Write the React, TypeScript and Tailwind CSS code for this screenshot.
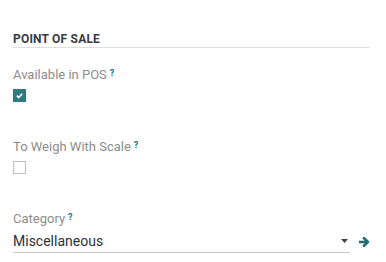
function Help() {
  return <sup className="ml-[3px] text-[9px] font-bold text-[#017e84] relative -top-[3px]">?</sup>;
}

function Check({ on }: { on: boolean }) {
  if (on)
    return (
      <div className="w-[13px] h-[13px] bg-[#2b7b80] flex items-center justify-center">
        <svg width="9" height="9" viewBox="0 0 10 10">
          <path d="M2 5.2 L4.1 7.2 L8 3" fill="none" stroke="white" strokeWidth="1.8" />
        </svg>
      </div>
    );
  return <div className="w-[13px] h-[13px] border border-[#bdbdbd] bg-white" />;
}

export default function App() {
  return (
    <div className="w-[386px] h-[262px] bg-white pl-[13px] pr-[16px] pt-[32px] font-['Roboto',sans-serif] overflow-hidden">
      <div className="text-[12px] font-bold tracking-[0.2px] text-[#3a3a44] leading-[14px] pb-[1px] border-b border-[#dfdfe2]">
        POINT OF SALE
      </div>

      <div className="mt-[19px] text-[13px] leading-[16px] text-[#8d8d8d]">
        Available in POS
        <Help />
      </div>
      <div className="mt-[6px]">
        <Check on />
      </div>

      <div className="mt-[37px] text-[13px] leading-[16px] text-[#8d8d8d]">
        To Weigh With Scale
        <Help />
      </div>
      <div className="mt-[6px]">
        <Check on={false} />
      </div>

      <div className="mt-[37px] text-[13px] leading-[16px] text-[#8d8d8d]">
        Category
        <Help />
      </div>
      <div className="mt-[6px] flex items-center">
        <div className="flex-1 flex items-center border-b border-[#c9c9c9] pb-[3px] pr-[2px]">
          <span className="flex-1 text-[14px] leading-[16px] text-[#2f2f38]">Miscellaneous</span>
          <svg width="7" height="4" viewBox="0 0 7 4">
            <path d="M0 0 H7 L3.5 4 Z" fill="#444" />
          </svg>
        </div>
        <svg className="ml-[9px] -mt-[3px]" width="11" height="10" viewBox="0 0 11 10">
          <path d="M0 5 H8" stroke="#1f6e74" strokeWidth="2.6" />
          <path d="M5 1.2 L8.9 5 L5 8.8" fill="none" stroke="#1f6e74" strokeWidth="2.6" strokeLinecap="round" strokeLinejoin="round" />
        </svg>
      </div>
    </div>
  );
}
